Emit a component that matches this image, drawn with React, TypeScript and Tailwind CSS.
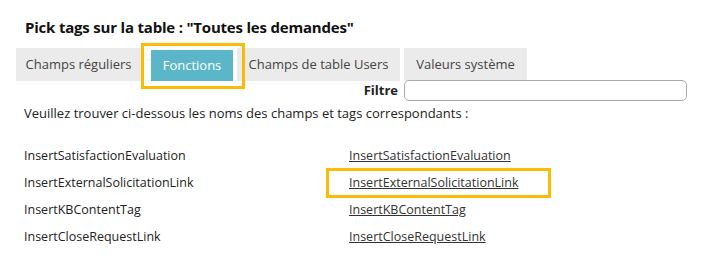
const rows = [
  "InsertSatisfactionEvaluation",
  "InsertExternalSolicitationLink",
  "InsertKBContentTag",
  "InsertCloseRequestLink",
];

const tabs = ["Champs réguliers", "Fonctions", "Champs de table Users", "Valeurs système"];

export default function App() {
  return (
    <div className="w-[724px] h-[261px] bg-white text-[#222] font-['Open_Sans','Liberation_Sans',sans-serif] overflow-hidden">
      <h1 className="pl-[25px] pt-[16px] text-[15px] leading-[22px] font-bold text-[#111] tracking-[-0.2px]">
        Pick tags sur la table : "Toutes les demandes"
      </h1>

      <div className="mt-[10px] ml-[16px] flex items-end">
        {tabs.map((t, i) =>
          i === 1 ? (
            <div
              key={t}
              className="relative ml-[10px] h-[31px] w-[82px] bg-[#5bb7c7] text-white text-[13px] flex items-center justify-center"
            >
              {t}
              <span className="absolute -left-[10px] -right-[12px] -top-[7px] -bottom-[8px] border-[3px] border-[#fbbc05]" />
            </div>
          ) : (
            <div
              key={t}
              className={`h-[33px] bg-[#ebebeb] text-[#444] text-[13px] flex items-center justify-center ${
                i === 0 ? "w-[125px]" : i === 2 ? "ml-[4px] w-[163px]" : "ml-[4px] w-[123px]"
              }`}
            >
              {t}
            </div>
          )
        )}
      </div>

      <div className="-mt-[1px] flex justify-end items-center pr-[37px] gap-[6px]">
        <span className="text-[13px] font-bold text-[#222]">Filtre</span>
        <input className="w-[283px] h-[21px] rounded-[5px] border border-[#aaa] outline-none" />
      </div>

      <p className="pl-[24px] mt-[1px] text-[13px] leading-[22px]">
        Veuillez trouver ci-dessous les noms des champs et tags correspondants :
      </p>

      <div className="mt-[18px] pl-[24px] grid grid-cols-[325px_1fr] text-[12.5px]">
        {rows.map((r, i) => (
          <div key={r} className="contents">
            <div className="h-[27px] leading-[27px]">{r}</div>
            <div className="relative h-[27px] leading-[27px]">
              <span className="underline text-[#333]">{r}</span>
              {i === 1 && (
                <span className="absolute -left-[23px] w-[225px] -top-[1px] -bottom-[2px] border-[3px] border-[#fbbc05]" />
              )}
            </div>
          </div>
        ))}
      </div>
    </div>
  );
}
